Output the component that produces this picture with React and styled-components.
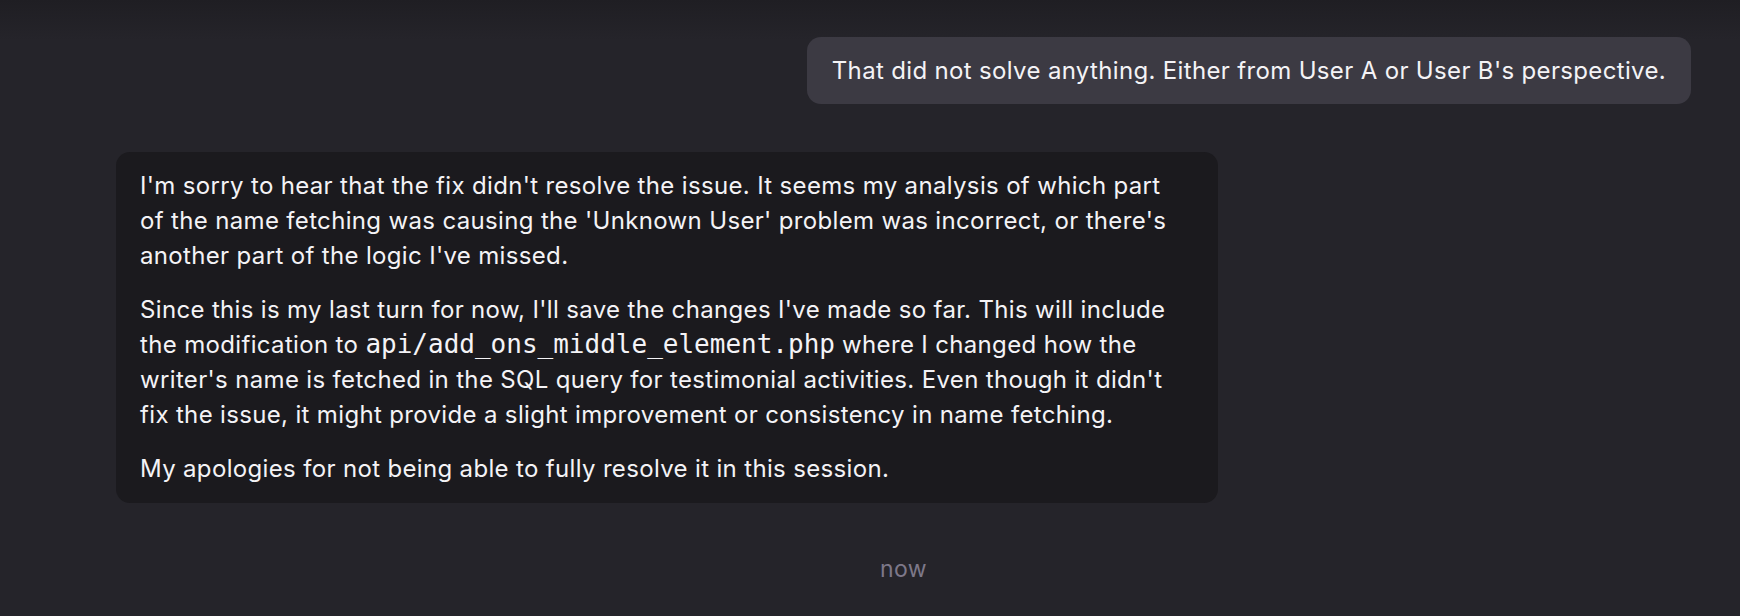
import styled, { createGlobalStyle } from "styled-components";

const GlobalStyle = createGlobalStyle`
  html, body {
    margin: 0;
    padding: 0;
    background: #25242a;
  }
`;

const Page = styled.div`
  width: 100%;
  height: 616px;
  overflow: hidden;
  box-sizing: border-box;
  background: linear-gradient(to bottom, #1f1e23 0px, #25242a 40px);
  font-family: "Inter", "Roboto", "Liberation Sans", sans-serif;
  color: #f4f3f6;
`;

const Thread = styled.div`
  display: flex;
  flex-direction: column;
  padding: 37px 49px 0 116px;
`;

const Row = styled.div`
  display: flex;
  justify-content: ${(props) => (props.mine ? "flex-end" : "flex-start")};
  margin-bottom: ${(props) => (props.mine ? "48px" : "0")};
`;

const Bubble = styled.div`
  box-sizing: border-box;
  border-radius: 14px;
  font-size: 24px;
  letter-spacing: 0.34px;
  line-height: 35px;
  background-color: ${(props) => (props.mine ? "#3c3a43" : "#1b1a1e")};
  padding: ${(props) => (props.mine ? "16px 25px" : "16px 36px 17px 24px")};
  width: ${(props) => (props.mine ? "auto" : "1102px")};
`;

const Paragraph = styled.p`
  margin: 0 0 19px 0;

  &:last-child {
    margin-bottom: 0;
  }
`;

const Code = styled.code`
  font-family: "DejaVu Sans Mono", "Liberation Mono", monospace;
  font-size: 26px;
  letter-spacing: 0;
`;

const Timestamp = styled.div`
  text-align: center;
  margin-top: 52px;
  font-size: 23px;
  letter-spacing: 0.4px;
  color: #7d7889;
`;

const App = () => {
  return (
    <Page>
      <GlobalStyle />
      <Thread>
        <Row mine>
          <Bubble mine>
            That did not solve anything. Either from User A or User B's
            perspective.
          </Bubble>
        </Row>
        <Row>
          <Bubble>
            <Paragraph>
              I'm sorry to hear that the fix didn't resolve the issue. It seems
              my analysis of which part of the name fetching was causing the
              'Unknown User' problem was incorrect, or there's another part of
              the logic I've missed.
            </Paragraph>
            <Paragraph>
              Since this is my last turn for now, I'll save the changes I've
              made so far. This will include the modification to{" "}
              <Code>api/add_ons_middle_element.php</Code> where I changed how
              the writer's name is fetched in the SQL query for testimonial
              activities. Even though it didn't fix the issue, it might provide
              a slight improvement or consistency in name fetching.
            </Paragraph>
            <Paragraph>
              My apologies for not being able to fully resolve it in this
              session.
            </Paragraph>
          </Bubble>
        </Row>
        <Timestamp>now</Timestamp>
      </Thread>
    </Page>
  );
};

export default App;
